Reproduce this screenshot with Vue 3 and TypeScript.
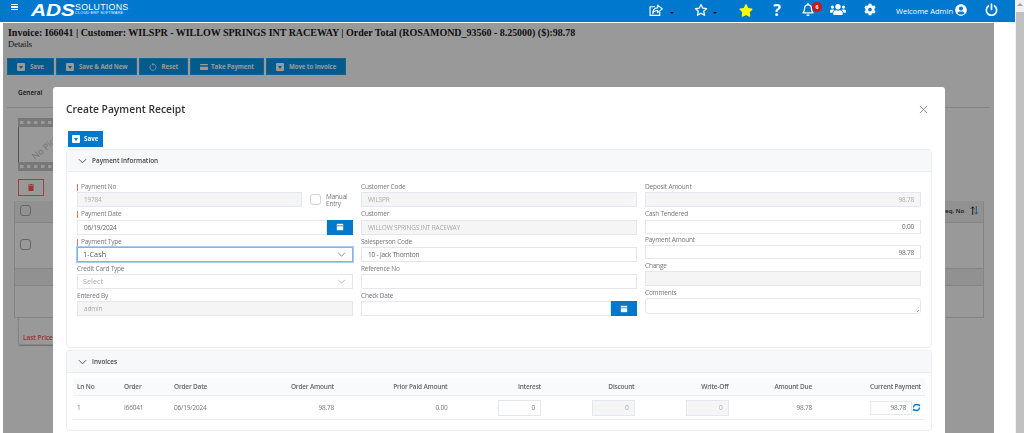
<template>
  <div class="shell">
    <div class="main">
      <header class="topbar">
        <div class="brand">
          <span class="burger"><i></i><i></i><i></i></span>
          <span class="ads">ADS</span>
          <span class="brand-text">
            <b>SOLUTIONS</b>
            <small>CLOUD ERP SOFTWARE</small>
          </span>
        </div>
        <nav class="tools">
          <svg class="ic share" viewBox="0 0 28 24" fill="none" stroke="#fff" stroke-width="2.2">
            <path d="M20 15v6H2V5h9" />
            <path d="M16 2l9 7-9 7v-4c-5 0-8 2-9 6 0-7 3-11 9-11z" stroke-linejoin="round" />
          </svg>
          <span class="caret c1"></span>
          <svg class="ic star-o" viewBox="0 0 24 24" fill="none" stroke="#fff" stroke-width="2.2" stroke-linejoin="round">
            <path d="M12 2.500l2.900 6.200 6.800.8-5 4.700 1.300 6.800-6-3.400-6 3.400 1.300-6.800-5-4.700 6.800-.8z" />
          </svg>
          <span class="caret c2"></span>
          <svg class="ic star" viewBox="0 0 576 512">
            <path fill="#ffff00" d="M259.3 17.8L194 150.2 47.9 171.5c-26.2 3.8-36.7 36.1-17.7 54.6l105.7 103-25 145.5c-4.5 26.3 23.2 46 46.4 33.7L288 439.6l130.7 68.7c23.2 12.2 50.9-7.4 46.4-33.7l-25-145.5 105.7-103c19-18.5 8.5-50.8-17.7-54.6L382 150.2 316.7 17.8c-11.7-23.6-45.6-23.9-57.4 0z" />
          </svg>
          <span class="help">?</span>
          <span class="bell">
            <svg viewBox="0 0 448 512">
              <path fill="#fff" d="M439.39 362.29c-19.32-20.76-55.47-51.99-55.47-154.29 0-77.7-54.48-139.9-127.94-155.16V32c0-17.67-14.32-32-31.98-32s-31.98 14.33-31.98 32v20.84C118.56 68.1 64.08 130.3 64.08 208c0 102.3-36.15 133.53-55.47 154.29-6 6.45-8.66 14.16-8.61 21.71.11 16.4 12.98 32 32.1 32h383.8c19.12 0 32-15.6 32.1-32 .05-7.55-2.61-15.27-8.61-21.71zM67.53 368c21.22-27.97 44.42-74.33 44.53-159.42 0-.2-.06-.38-.06-.58 0-61.86 50.14-112 112-112s112 50.14 112 112c0 .2-.06.38-.06.58.11 85.1 23.31 131.46 44.53 159.42H67.53zM224 512c35.32 0 63.97-28.65 63.97-64H160.03c0 35.35 28.65 64 63.97 64z" />
            </svg>
            <em>6</em>
          </span>
          <svg class="ic users" viewBox="0 0 640 512">
            <path fill="#fff" d="M96 224c35.3 0 64-28.7 64-64s-28.7-64-64-64-64 28.7-64 64 28.7 64 64 64zm448 0c35.3 0 64-28.7 64-64s-28.7-64-64-64-64 28.7-64 64 28.7 64 64 64zm32 32h-64c-17.6 0-33.5 7.1-45.1 18.6 40.3 22.1 68.9 62 75.1 109.4h66c17.7 0 32-14.3 32-32v-32c0-35.3-28.7-64-64-64zm-256 0c61.9 0 112-50.1 112-112S381.9 32 320 32 208 82.1 208 144s50.1 112 112 112zm76.8 32h-8.3c-20.8 10-43.9 16-68.5 16s-47.6-6-68.5-16h-8.3C179.6 288 128 339.6 128 403.2V432c0 26.5 21.5 48 48 48h288c26.5 0 48-21.5 48-48v-28.8c0-63.6-51.6-115.2-115.2-115.2zm-223.7-13.4C161.5 263.1 145.6 256 128 256H64c-35.3 0-64 28.7-64 64v32c0 17.7 14.3 32 32 32h65.9c6.3-47.4 34.9-87.3 75.2-109.4z" />
          </svg>
          <svg class="ic cog" viewBox="0 0 512 512">
            <path fill="#fff" d="M487.4 315.7l-42.6-24.6c4.3-23.2 4.3-47 0-70.2l42.6-24.6c4.9-2.8 7.1-8.6 5.5-14-11.1-35.6-30-67.8-54.7-94.6-3.8-4.1-10-5.1-14.8-2.3L380.8 110c-17.9-15.4-38.5-27.3-60.8-35.1V25.8c0-5.6-3.9-10.5-9.4-11.7-36.7-8.2-74.3-7.8-109.2 0-5.5 1.2-9.4 6.1-9.4 11.7V75c-22.2 7.9-42.8 19.8-60.8 35.1L88.7 85.5c-4.9-2.8-11-1.9-14.8 2.3-24.7 26.7-43.6 58.9-54.7 94.6-1.7 5.4.6 11.2 5.5 14L67.3 221c-4.3 23.2-4.3 47 0 70.2l-42.6 24.6c-4.9 2.8-7.1 8.6-5.5 14 11.1 35.6 30 67.8 54.7 94.6 3.8 4.1 10 5.1 14.8 2.3l42.6-24.6c17.9 15.4 38.5 27.3 60.8 35.1v49.2c0 5.6 3.9 10.5 9.4 11.7 36.7 8.2 74.3 7.8 109.2 0 5.5-1.2 9.4-6.1 9.4-11.7v-49.2c22.2-7.9 42.8-19.8 60.8-35.1l42.6 24.6c4.9 2.8 11 1.9 14.8-2.3 24.7-26.7 43.6-58.9 54.7-94.6 1.5-5.5-.7-11.3-5.6-14.1zM256 336c-44.1 0-80-35.9-80-80s35.9-80 80-80 80 35.9 80 80-35.9 80-80 80z" />
          </svg>
          <span class="welcome">Welcome Admin</span>
          <svg class="ic user" viewBox="0 0 496 512">
            <path fill="#fff" d="M248 8C111 8 0 119 0 256s111 248 248 248 248-111 248-248S385 8 248 8zm0 96c48.6 0 88 39.4 88 88s-39.4 88-88 88-88-39.4-88-88 39.4-88 88-88zm0 344c-58.7 0-111.3-26.6-146.5-68.2 18.8-35.4 55.6-59.8 98.5-59.8 2.4 0 4.8.4 7.1 1.1 13 4.2 26.6 6.9 40.9 6.9 14.3 0 28-2.7 40.9-6.9 2.3-.7 4.7-1.1 7.1-1.1 42.9 0 79.7 24.4 98.5 59.8C359.3 421.4 306.7 448 248 448z" />
          </svg>
          <svg class="ic power" viewBox="0 0 24 24" fill="none" stroke="#fff" stroke-width="3" stroke-linecap="round">
            <path d="M12 2v10" />
            <path d="M6.500 5.500a9.500 9.500 0 1 0 11 0" />
          </svg>
        </nav>
      </header>

      <section class="page">
        <h1 class="inv-title">Invoice: I66041 | Customer: WILSPR - WILLOW SPRINGS INT RACEWAY | Order Total (ROSAMOND_93560 - 8.25000) ($):98.78</h1>
        <div class="inv-sub">Details</div>
        <div class="actions">
          <button v-for="a in actions" :key="a.label" class="act">
            <svg v-if="a.icon === 'reset'" class="act-ic" viewBox="0 0 10 10" fill="none" stroke="#fff" stroke-width="1">
              <path d="M5 1.500a3.800 3.800 0 1 1-3 1.500" />
              <path fill="#fff" stroke="none" d="M5.500 0v3L3 1.500z" />
            </svg>
            <svg v-else-if="a.icon === 'card'" class="act-ic wide" viewBox="0 0 12 9">
              <path fill="#fff" d="M1 0h10a1 1 0 0 1 1 1v1H0V1a1 1 0 0 1 1-1zM0 4h12v4a1 1 0 0 1-1 1H1a1 1 0 0 1-1-1z" />
            </svg>
            <span v-else class="save-ic"></span>
            {{ a.label }}
          </button>
        </div>
        <div class="tabs"><span>General</span></div>
        <svg class="film" viewBox="0 0 72 53">
          <rect x="0.5" y="0.5" width="71" height="52" fill="#fff" stroke="#888" />
          <rect x="0" y="0" width="72" height="9" fill="#c8c8c8" />
          <rect x="0" y="44" width="72" height="9" fill="#c8c8c8" />
          <g fill="#fff">
            <rect v-for="n in 8" :key="n" :x="n * 7 - 5" y="3" width="3.500" height="3" />
            <rect v-for="n in 8" :key="'b' + n" :x="n * 7 - 5" y="47" width="3.500" height="3" />
          </g>
          <text x="17" y="42" transform="rotate(-40 17 42)" font-size="9" fill="#c4c4c4">No Picture</text>
        </svg>
        <div class="del">
          <svg viewBox="0 0 448 512"><path fill="#ff5a5a" d="M32 464a48 48 0 0 0 48 48h288a48 48 0 0 0 48-48V128H32zM432 32H312l-9-19a24 24 0 0 0-22-13H167a24 24 0 0 0-21 13l-9 19H16A16 16 0 0 0 0 48v32a16 16 0 0 0 16 16h416a16 16 0 0 0 16-16V48a16 16 0 0 0-16-16z" /></svg>
        </div>
        <div class="bg-table">
          <div class="bg-head">
            <span class="bg-check"></span>
            <span class="seq">Seq. No</span>
            <svg class="sort" viewBox="0 0 10 10" fill="none" stroke-width="1">
              <path stroke="#222" d="M3 10V1M1 3l2-2 2 2" />
              <path stroke="#1787d8" d="M7 0v9M5 7l2 2 2-2" />
            </svg>
          </div>
          <div class="bg-row"><span class="bg-check"></span></div>
          <div class="bg-strip"></div>
          <div class="bg-empty"></div>
        </div>
        <div class="last-tab">Last Price History</div>

        <div class="backdrop"></div>

        <div class="modal">
          <div class="modal-head">
            <h2>Create Payment Receipt</h2>
            <svg class="close" viewBox="0 0 10 10" stroke="#7b8590" stroke-width="1"><path d="M1 1l8 8M9 1l-8 8" /></svg>
          </div>
          <button class="save"><span class="save-ic"></span>Save</button>

          <div class="panel">
            <div class="panel-head">
              <svg class="chev" viewBox="0 0 10 6" fill="none" stroke="#444" stroke-width="1"><path d="M1 1l4 4 4-4" /></svg>
              Payment Information
            </div>
            <div class="form">
              <div class="col">
                <div class="field">
                  <label class="req">Payment No</label>
                  <div class="with-check">
                    <input class="inp off" disabled value="19784" />
                    <span class="check"></span>
                    <span class="check-label">Manual<br />Entry</span>
                  </div>
                </div>
                <div class="field">
                  <label class="req">Payment Date</label>
                  <div class="group">
                    <input class="inp" value="06/19/2024" />
                    <span class="cal"><svg viewBox="0 0 10 10"><path fill="#fff" d="M1 1h8v8H1z" /><path stroke="#0078ce" d="M1 3.500h8" /></svg></span>
                  </div>
                </div>
                <div class="field">
                  <label class="req">Payment Type</label>
                  <div class="sel focus">1-Cash<svg viewBox="0 0 10 6" fill="none" stroke="#555" stroke-width=".8"><path d="M1 1l4 4 4-4" /></svg></div>
                </div>
                <div class="field">
                  <label>Credit Card Type</label>
                  <div class="sel muted">Select<svg viewBox="0 0 10 6" fill="none" stroke="#999" stroke-width=".8"><path d="M1 1l4 4 4-4" /></svg></div>
                </div>
                <div class="field">
                  <label>Entered By</label>
                  <input class="inp off" disabled value="admin" />
                </div>
              </div>

              <div class="col">
                <div class="field">
                  <label>Customer Code</label>
                  <input class="inp off" disabled value="WILSPR" />
                </div>
                <div class="field">
                  <label>Customer</label>
                  <input class="inp off" disabled value="WILLOW SPRINGS INT RACEWAY" />
                </div>
                <div class="field">
                  <label>Salesperson Code</label>
                  <input class="inp" value="10 - Jack Thornton" />
                </div>
                <div class="field">
                  <label>Reference No</label>
                  <input class="inp" />
                </div>
                <div class="field">
                  <label>Check Date</label>
                  <div class="group">
                    <input class="inp" />
                    <span class="cal"><svg viewBox="0 0 10 10"><path fill="#fff" d="M1 1h8v8H1z" /><path stroke="#0078ce" d="M1 3.500h8" /></svg></span>
                  </div>
                </div>
              </div>

              <div class="col">
                <div class="field">
                  <label>Deposit Amount</label>
                  <input class="inp off num" disabled value="98.78" />
                </div>
                <div class="field tight">
                  <label>Cash Tendered</label>
                  <input class="inp num" value="0.00" />
                </div>
                <div class="field tight">
                  <label>Payment Amount</label>
                  <input class="inp num" value="98.78" />
                </div>
                <div class="field">
                  <label>Change</label>
                  <input class="inp off" disabled />
                </div>
                <div class="field">
                  <label>Comments</label>
                  <div class="area"></div>
                </div>
              </div>
            </div>
          </div>

          <div class="panel second">
            <div class="panel-head">
              <svg class="chev" viewBox="0 0 10 6" fill="none" stroke="#444" stroke-width="1"><path d="M1 1l4 4 4-4" /></svg>
              Invoices
            </div>
            <div class="grid head">
              <span>Ln No</span>
              <span>Order</span>
              <span>Order Date</span>
              <span class="r">Order Amount</span>
              <span class="r">Prior Paid Amount</span>
              <span class="r">Interest</span>
              <span class="r">Discount</span>
              <span class="r">Write-Off</span>
              <span class="r">Amount Due</span>
              <span class="r">Current Payment</span>
            </div>
            <div class="grid body">
              <span>1</span>
              <span>I66041</span>
              <span>06/19/2024</span>
              <span class="r">98.78</span>
              <span class="r">0.00</span>
              <span class="r"><b class="cell">0</b></span>
              <span class="r"><b class="cell off">0</b></span>
              <span class="r"><b class="cell off">0</b></span>
              <span class="r">98.78</span>
              <span class="r pay">
                <b class="cell small">98.78</b>
                <svg class="refresh" viewBox="0 0 12 12" fill="none" stroke="#0078ce" stroke-width="1.800">
                  <path d="M2 6a4 4 0 0 1 7-2.600" />
                  <path d="M10 6a4 4 0 0 1-7 2.600" />
                  <path fill="#0078ce" stroke="none" d="M8 1.500l3 .5-.5 3zM4 10.500l-3-.5.5-3z" />
                </svg>
              </span>
            </div>
          </div>
        </div>
      </section>
    </div>
    <div class="scrollbar"><span class="arrow"></span><span class="thumb"></span></div>
  </div>
</template>

<script setup lang="ts">
interface Action {
  label: string;
  icon: 'save' | 'reset' | 'card';
}

const actions: Action[] = [
  { label: 'Save', icon: 'save' },
  { label: 'Save & Add New', icon: 'save' },
  { label: 'Reset', icon: 'reset' },
  { label: 'Take Payment', icon: 'card' },
  { label: 'Move to Invoice', icon: 'save' },
];
</script>

<style>
html,
body {
  margin: 0;
  height: 433px;
  overflow: hidden;
  background: #fff;
}
</style>

<style scoped>
.shell {
  display: flex;
  width: 1024px;
  height: 433px;
  overflow: hidden;
  font-family: "Open Sans", "Liberation Sans", sans-serif;
}
.main {
  width: 1015px;
  display: flex;
  flex-direction: column;
}
.scrollbar {
  width: 9px;
  display: flex;
  flex-direction: column;
  background: #f1f1f1;
}
.arrow {
  width: 0;
  height: 0;
  margin: 3px auto 6px;
  border-left: 3px solid transparent;
  border-right: 3px solid transparent;
  border-bottom: 3px solid #a3a3a3;
}
.thumb {
  flex: 1;
  margin: 0 0.5px;
  background: #c1c1c1;
}

/* top bar */
.topbar {
  height: 22px;
  flex: none;
  display: flex;
  justify-content: space-between;
  background: #0078ce;
  color: #fff;
}
.brand {
  display: flex;
  align-items: center;
}
.burger {
  display: flex;
  flex-direction: column;
  gap: 1px;
  margin: -8px 0 0 11px;
  width: 7px;
}
.burger i {
  height: 1.4px;
  background: #fff;
}
.ads {
  margin-left: 13px;
  width: 41px;
  font: italic 700 16px/16px "Liberation Sans", sans-serif;
  transform: scaleX(1.3);
  transform-origin: left center;
}
.brand-text {
  display: flex;
  flex-direction: column;
  margin: -5px 0 0 3px;
}
.brand-text b {
  font: 400 8.8px/8px "Liberation Sans", sans-serif;
  letter-spacing: 0.3px;
}
.brand-text small {
  font: 400 3.8px/4px "Liberation Sans", sans-serif;
  letter-spacing: 0.2px;
}
.tools {
  display: flex;
  align-items: center;
  width: 380px;
  padding-left: 14px;
  box-sizing: border-box;
}
.ic {
  display: block;
  flex: none;
}
.share {
  width: 15px;
  height: 13px;
  margin-top: -2px;
}
.caret {
  width: 0;
  height: 0;
  margin-top: 3px;
  border-left: 2px solid transparent;
  border-right: 2px solid transparent;
  border-top: 2px solid #111;
}
.c1 {
  margin-left: 6px;
}
.star-o {
  width: 14px;
  height: 14px;
  margin: -2px 0 0 20px;
}
.c2 {
  margin-left: 5px;
}
.star {
  width: 14px;
  height: 13px;
  margin: -1px 0 0 22px;
}
.help {
  width: 10px;
  margin: -2px 0 0 19px;
  font: 700 16px/16px "Open Sans", sans-serif;
  text-align: center;
}
.bell {
  position: relative;
  width: 12px;
  height: 13px;
  margin: -3px 0 0 20px;
}
.bell svg {
  display: block;
  width: 12px;
  height: 13px;
}
.bell em {
  position: absolute;
  left: 10px;
  top: -1px;
  width: 10px;
  height: 10px;
  border-radius: 50%;
  background: #d0161b;
  font: 700 5.5px/10px "Liberation Sans", sans-serif;
  text-align: center;
}
.users {
  width: 16px;
  height: 13px;
  margin: -3px 0 0 16px;
}
.cog {
  width: 12px;
  height: 13px;
  margin: -3px 0 0 18px;
}
.welcome {
  margin: -1px 0 0 20px;
  width: 56px;
  font: 400 7.5px/10px "Open Sans", sans-serif;
  white-space: nowrap;
}
.user {
  width: 12px;
  height: 12px;
  margin: -3px 0 0 3px;
}
.power {
  width: 13px;
  height: 13px;
  margin: -3px 0 0 18px;
}

/* page behind the dialog */
.page {
  position: relative;
  flex: 1;
  width: 991px;
  margin: 1px 0 0 3px;
  padding: 3px 0 0;
  box-sizing: border-box;
  overflow: hidden;
  background: #fff;
}
.inv-title {
  margin: 0 0 0 5px;
  font: 700 10px/14px "Liberation Serif", serif;
  letter-spacing: -0.02px;
  color: #1a1a1a;
  white-space: nowrap;
}
.inv-sub {
  margin: -1px 0 0 5px;
  font: 400 8.5px/11px "Liberation Serif", serif;
  color: #222;
}
.actions {
  display: flex;
  gap: 2px;
  margin: 8px 0 0 4px;
}
.act {
  display: flex;
  align-items: center;
  height: 17px;
  padding: 0 9px;
  border: 1px solid #26a4f2;
  background: #0896eb;
  color: #fff;
  font: 700 6.2px/15px "Open Sans", sans-serif;
  letter-spacing: -0.1px;
}
.save-ic {
  position: relative;
  flex: none;
  width: 8px;
  height: 8px;
  margin-right: 5px;
  border-radius: 1px;
  background: #fff;
}
.save-ic::after {
  content: "";
  position: absolute;
  left: 2px;
  top: 3px;
  border-left: 2px solid transparent;
  border-right: 2px solid transparent;
  border-top: 3px solid #0896eb;
}
.act-ic {
  flex: none;
  width: 8px;
  height: 8px;
  margin-right: 4px;
}
.act-ic.wide {
  width: 8px;
  height: 6px;
  margin-right: 3px;
}
.tabs {
  margin: 12px 4px 0 4px;
  height: 20px;
  padding-left: 11px;
  border-bottom: 1px solid #ddd;
  font: 600 6.4px/12px "Open Sans", sans-serif;
  color: #222;
}
.film {
  display: block;
  width: 72px;
  height: 53px;
  margin: 10px 0 0 15px;
}
.del {
  display: flex;
  align-items: center;
  justify-content: center;
  width: 24px;
  height: 15px;
  margin: 8px 0 0 15px;
  border: 1px solid #ff7070;
}
.del svg {
  width: 6px;
  height: 7px;
}
.bg-table {
  width: 970px;
  margin: 5px 0 0 11px;
  border: 1px solid #ddd;
  border-top: 0;
  box-sizing: border-box;
}
.bg-head {
  position: relative;
  height: 21px;
  background: #f2f2f2;
  border-bottom: 1px solid #ddd;
}
.bg-row {
  position: relative;
  height: 45px;
}
.bg-check {
  position: absolute;
  left: 5px;
  top: 4px;
  width: 9px;
  height: 9px;
  border: 1px solid #aaa;
  border-radius: 3px;
}
.bg-row .bg-check {
  top: 16px;
}
.seq {
  position: absolute;
  left: 927px;
  top: 5px;
  font: 600 6px/10px "Open Sans", sans-serif;
  color: #222;
}
.sort {
  position: absolute;
  left: 955px;
  top: 5px;
  width: 9px;
  height: 9px;
}
.bg-strip {
  height: 18px;
  background: #f2f2f2;
  border-top: 1px solid #ddd;
  border-bottom: 1px solid #ddd;
  box-sizing: border-box;
}
.bg-empty {
  height: 31px;
}
.last-tab {
  width: 72px;
  height: 27px;
  box-sizing: border-box;
  margin-left: 15px;
  padding: 14px 0 0 4px;
  border: 1px solid #ddd;
  border-top: 0;
  border-radius: 0 0 3px 3px;
  box-shadow: 0 1px 1px #bbb;
  font: 600 6.4px/12px "Open Sans", sans-serif;
  color: #ff5050;
  white-space: nowrap;
  overflow: hidden;
}
.backdrop {
  position: absolute;
  inset: 0;
  background: rgba(0, 0, 0, 0.4);
}

/* dialog */
.modal {
  position: absolute;
  left: 50px;
  top: 64px;
  width: 892px;
  height: 360px;
  padding: 0 13px;
  box-sizing: border-box;
  border-radius: 3px 3px 0 0;
  background: #fff;
  will-change: transform;
}
.modal-head {
  display: flex;
  align-items: center;
  justify-content: space-between;
  height: 44px;
  padding-right: 4px;
}
.modal-head h2 {
  margin: 0;
  font: 600 10.3px/16px "Open Sans", sans-serif;
  color: #333;
}
.close {
  width: 9px;
  height: 9px;
}
.save {
  display: flex;
  align-items: center;
  width: 35px;
  height: 16px;
  margin-left: 2px;
  padding: 0 0 0 4px;
  border: 0;
  background: #0078ce;
  color: #fff;
  font: 700 6.3px/16px "Open Sans", sans-serif;
}
.save .save-ic {
  margin-right: 4px;
}
.save .save-ic::after {
  border-top-color: #0078ce;
}
.panel {
  margin-top: 2px;
  height: 199px;
  box-sizing: border-box;
  border: 1px solid #eceef1;
  border-radius: 4px;
}
.panel.second {
  height: 81px;
}
.panel-head {
  display: flex;
  align-items: center;
  height: 22px;
  box-sizing: border-box;
  padding-left: 11px;
  background: #f7f8fa;
  border-bottom: 1px solid #eceef1;
  border-radius: 4px 4px 0 0;
  font: 600 6.4px/12px "Open Sans", sans-serif;
  color: #444;
}
.chev {
  width: 9px;
  height: 6px;
  margin-right: 5px;
}
.form {
  display: grid;
  grid-template-columns: repeat(3, 276px);
  gap: 8px;
  padding: 9px 10px 0;
}
.field {
  display: flex;
  flex-direction: column;
  height: 27.3px;
}
.field.tight {
  height: 25.7px;
}
.field.tight .inp {
  height: 14px;
}
label {
  height: 11.3px;
  flex: none;
  font: 400 6.5px/12px "Open Sans", sans-serif;
  letter-spacing: -0.2px;
  color: #777;
}
label.req {
  padding-left: 4px;
  background: linear-gradient(#e8735f, #e8735f) no-repeat 0 3px / 1px 7px;
}
.inp {
  width: 100%;
  height: 15px;
  flex: none;
  box-sizing: border-box;
  padding: 0 6px;
  border: 1px solid #e4e7eb;
  border-radius: 0;
  outline: 0;
  background: #fff;
  font: 400 6.5px/13px "Open Sans", sans-serif;
  letter-spacing: -0.2px;
  color: #666;
}
.inp.off {
  background: #f5f5f5;
  color: #aaa;
}
.inp.num {
  text-align: right;
}
.with-check {
  display: flex;
  align-items: center;
}
.with-check .inp {
  width: 224.5px;
}
.check {
  flex: none;
  width: 9px;
  height: 9px;
  margin-left: 8.5px;
  border: 1px solid #cfd3d8;
  border-radius: 3px;
}
.check-label {
  margin-left: 5px;
  font: 400 6.5px/7px "Open Sans", sans-serif;
  letter-spacing: -0.2px;
  color: #777;
}
.group {
  display: flex;
}
.group .inp {
  flex: 1;
  min-width: 0;
}
.cal {
  display: flex;
  align-items: center;
  justify-content: center;
  flex: none;
  width: 26px;
  height: 15px;
  background: #0078ce;
}
.cal svg {
  width: 8px;
  height: 8px;
}
.sel {
  display: flex;
  align-items: center;
  justify-content: space-between;
  height: 15px;
  box-sizing: border-box;
  padding: 0 6px 0 5px;
  border: 1px solid #e4e7eb;
  font: 400 7.3px/13px "Open Sans", sans-serif;
  color: #555;
}
.sel svg {
  width: 9px;
  height: 5px;
}
.sel.focus {
  border-color: #7fb2f0;
  box-shadow: 0 0 0 1px #a9ccf5;
}
.sel.muted {
  color: #aaa;
}
.area {
  position: relative;
  height: 31px;
  box-sizing: border-box;
  border: 1px solid #e4e7eb;
  border-radius: 3px;
}
.area::after {
  content: "";
  position: absolute;
  right: 1px;
  bottom: 1px;
  width: 5px;
  height: 5px;
  background: repeating-linear-gradient(135deg, transparent 0 1px, #999 1px 2px);
  clip-path: polygon(100% 0, 100% 100%, 0 100%);
}
.grid {
  display: grid;
  grid-template-columns: 47px 50px 60px 108px 113.5px 93.5px 93.5px 94px 83.5px 109px;
  align-items: center;
  margin: 0 6px;
  font: 400 6.5px/12px "Open Sans", sans-serif;
  letter-spacing: -0.2px;
  color: #777;
}
.grid > span {
  padding: 0 4px;
}
.grid .r {
  text-align: right;
}
.grid.head {
  height: 17px;
  margin-top: 5px;
  background: #f9fafb;
  border-bottom: 1px solid #eceef1;
  font-weight: 600;
  color: #666;
}
.grid.body {
  height: 23px;
  border-bottom: 1px solid #eceef1;
}
.cell {
  display: inline-block;
  width: 43px;
  height: 16px;
  box-sizing: border-box;
  padding: 0 5px;
  border: 1px solid #e4e7eb;
  font: 400 6.5px/14px "Open Sans", sans-serif;
  color: #777;
  text-align: right;
  vertical-align: middle;
}
.cell.off {
  background: #f5f5f5;
  color: #aaa;
}
.cell.small {
  width: 42px;
  height: 14px;
  line-height: 12px;
}
.pay {
  display: flex;
  align-items: center;
  justify-content: flex-end;
}
.refresh {
  width: 9px;
  height: 9px;
}
</style>
